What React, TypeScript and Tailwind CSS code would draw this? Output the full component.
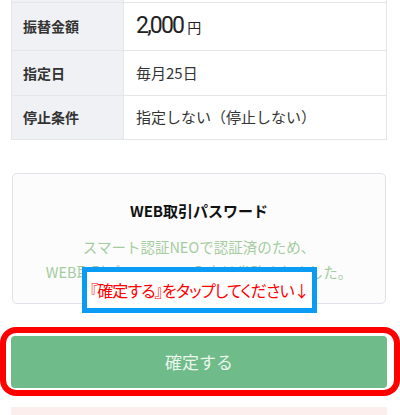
import React from "react";

const rows = [
  { label: "振替金額", h: "h-[48px]", value: (
    <span className="flex items-baseline gap-[4px] text-[#222]">
      <span className="text-[23px] tracking-[-1.8px]" style={{ fontFamily: "Roboto, 'Noto Sans CJK JP', sans-serif" }}>2,000</span>
      <span className="text-[14px]">円</span>
    </span>
  ) },
  { label: "指定日", h: "h-[45px]", value: <span className="text-[15px] text-[#333]">毎月25日</span> },
  { label: "停止条件", h: "h-[44px]", value: <span className="text-[15px] text-[#333]">指定しない（停止しない）</span> },
];

export default function App() {
  return (
    <div
      className="relative w-[400px] h-[415px] overflow-hidden bg-white"
      style={{ fontFamily: "'Noto Sans CJK JP', 'Noto Sans', sans-serif" }}
    >
      <div className="mx-[11px] w-[376px] border-x border-b border-[#e4e6ea]">
        <div className="grid grid-cols-[112px_1fr] h-[2px]">
          <div className="bg-[#eff1f4] border-r border-[#e4e6ea]" />
          <div />
        </div>
        {rows.map((r) => (
          <div key={r.label} className={`grid grid-cols-[112px_1fr] border-t border-[#e4e6ea] ${r.h}`}>
            <div className="bg-[#eff1f4] border-r border-[#e4e6ea] flex items-center pl-[11px] text-[14px] font-bold text-[#333]">
              {r.label}
            </div>
            <div className="flex items-center pl-[12px]">{r.value}</div>
          </div>
        ))}
      </div>

      <div className="mx-[12px] mt-[33px] w-[374px] h-[131px] rounded-[5px] border border-[#dfe2e8] bg-[#fcfcfd] flex flex-col items-center">
        <div className="mt-[26px] text-[15px] font-bold text-[#111] leading-[22px]">WEB取引パスワード</div>
        <div className="mt-[12px] text-[14.5px] leading-[25px] text-[#a5cc9e] text-center">
          <div>スマート認証NEOで認証済のため、</div>
          <div>WEB取引パスワードの入力は省略されました。</div>
        </div>
      </div>

      <div className="mx-[11px] mt-[32px] w-[376px] h-[52px] rounded-[4px] bg-[#6fbb89] flex items-center justify-center text-[17px] text-[#eaf5ec]">
        確定する
      </div>

      <div className="mx-[11px] mt-[19px] w-[376px] h-[20px] bg-[#fdeeee]" />

      <div className="absolute left-[82px] top-[267px] w-[235px] h-[46px] border-[5px] border-[#0a9bf5] bg-white flex items-center justify-center text-[16px] tracking-[-0.8px] [font-feature-settings:'palt'] text-[#ff0000] whitespace-nowrap">
        『確定する』をタップしてください↓
      </div>

      <div className="absolute left-0 top-[327px] w-[400px] h-[69px] border-[6px] border-[#ff0000] rounded-[16px] pointer-events-none" />
    </div>
  );
}
